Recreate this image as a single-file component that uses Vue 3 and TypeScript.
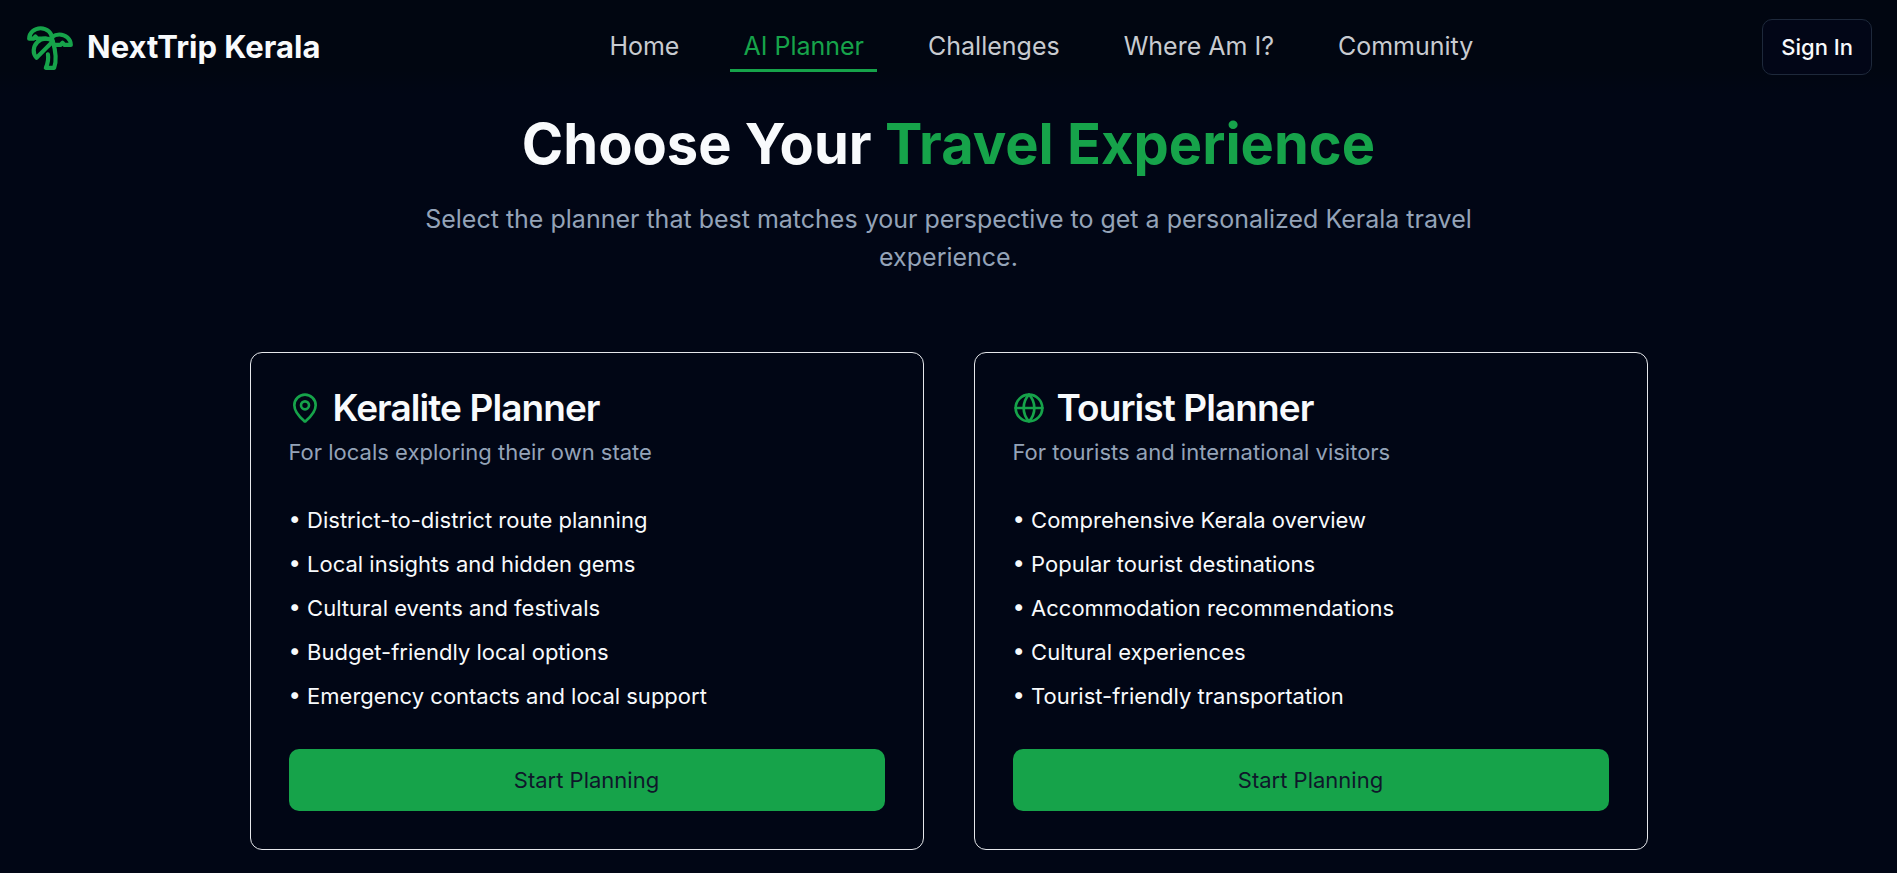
<script setup lang="ts">
interface NavItem {
  label: string
  active?: boolean
}

interface Planner {
  title: string
  description: string
  icon: 'pin' | 'globe'
  features: string[]
}

const navItems: NavItem[] = [
  { label: 'Home' },
  { label: 'AI Planner', active: true },
  { label: 'Challenges' },
  { label: 'Where Am I?' },
  { label: 'Community' },
]

const planners: Planner[] = [
  {
    title: 'Keralite Planner',
    description: 'For locals exploring their own state',
    icon: 'pin',
    features: [
      'District-to-district route planning',
      'Local insights and hidden gems',
      'Cultural events and festivals',
      'Budget-friendly local options',
      'Emergency contacts and local support',
    ],
  },
  {
    title: 'Tourist Planner',
    description: 'For tourists and international visitors',
    icon: 'globe',
    features: [
      'Comprehensive Kerala overview',
      'Popular tourist destinations',
      'Accommodation recommendations',
      'Cultural experiences',
      'Tourist-friendly transportation',
    ],
  },
]
</script>

<template>
  <div class="page">
    <header class="header">
      <a class="brand" href="#">
        <svg class="brand-icon" viewBox="0 0 24 24" aria-hidden="true">
          <path d="M13 8c0-2.76-2.46-5-5.5-5S2 5.24 2 8h2l1-1 1 1h4" />
          <path d="M13 7.14A5.82 5.82 0 0 1 16.5 6c3.04 0 5.5 2.24 5.5 5h-3l-1-1-1 1h-3" />
          <path d="M5.89 9.71c-2.15 2.15-2.3 5.47-.35 7.43l4.24-4.25.7-.7.71-.71 2.12-2.12c-1.95-1.96-5.27-1.8-7.42.35" />
          <path d="M11 15.5c.5 2.5-.17 4.5-1 6.5h4c2-5.5-.5-12-1-14" />
        </svg>
        <span>NextTrip Kerala</span>
      </a>
      <nav class="nav">
        <a
          v-for="item in navItems"
          :key="item.label"
          href="#"
          class="nav-link"
          :class="{ active: item.active }"
          :aria-current="item.active ? 'page' : undefined"
        >{{ item.label }}</a>
      </nav>
      <button type="button" class="sign-in">Sign In</button>
    </header>

    <main class="main">
      <section class="intro">
        <h1>Choose Your <span class="accent">Travel Experience</span></h1>
        <p>Select the planner that best matches your perspective to get a personalized Kerala travel experience.</p>
      </section>

      <section class="cards">
        <article v-for="planner in planners" :key="planner.title" class="card">
          <h2>
            <svg class="card-icon" viewBox="0 0 24 24" aria-hidden="true">
              <template v-if="planner.icon === 'pin'">
                <path d="M20 10c0 4.993-5.539 10.193-7.399 11.799a1 1 0 0 1-1.202 0C9.539 20.193 4 14.993 4 10a8 8 0 0 1 16 0" />
                <circle cx="12" cy="10" r="3" />
              </template>
              <template v-else>
                <circle cx="12" cy="12" r="10" />
                <path d="M12 2a14.5 14.5 0 0 0 0 20 14.5 14.5 0 0 0 0-20" />
                <path d="M2 12h20" />
              </template>
            </svg>
            <span>{{ planner.title }}</span>
          </h2>
          <p class="description">{{ planner.description }}</p>
          <ul>
            <li v-for="feature in planner.features" :key="feature">• {{ feature }}</li>
          </ul>
          <button type="button" class="start">Start Planning</button>
        </article>
      </section>
    </main>
  </div>
</template>

<style>
body {
  margin: 0;
  background: #010615;
}
</style>

<style scoped>
.page {
  min-height: 100vh;
  box-sizing: border-box;
  background: #010615;
  color: #f8fafc;
  font-family: Inter, "Liberation Sans", sans-serif;
  font-size: 22px;
  line-height: 32px;
}

.header {
  display: flex;
  align-items: center;
  justify-content: space-between;
  padding: 19px 25px;
  background: linear-gradient(#010611 75%, #010615);
}

.brand {
  display: flex;
  align-items: center;
  gap: 12px;
  color: inherit;
  text-decoration: none;
  font-size: 31px;
  font-weight: 700;
}

svg {
  flex: none;
  fill: none;
  stroke: #16a34a;
  stroke-width: 2;
  stroke-linecap: round;
  stroke-linejoin: round;
}

.brand-icon {
  width: 50px;
  height: 50px;
}

.nav {
  display: flex;
  gap: 38px;
}

.nav-link {
  padding: 8px 13px 7px;
  border-bottom: 3px solid transparent;
  color: #c8cbd0;
  text-decoration: none;
  font-size: 25px;
}

.nav-link.active {
  border-color: #16a34a;
  color: #16a34a;
}

button {
  font: inherit;
  cursor: pointer;
}

.sign-in {
  padding: 11px 18px;
  border: 1px solid #1e293b;
  border-radius: 10px;
  background: #020617;
  color: #f8fafc;
  font-weight: 500;
}

.main {
  padding: 19px 25px 23px;
}

.intro {
  max-width: 1050px;
  margin: 0 auto 76px;
  text-align: center;
}

h1 {
  margin: 0 0 25px;
  font-size: 56px;
  font-weight: 700;
  line-height: 62px;
}

.accent {
  color: #16a34a;
}

.intro p {
  margin: 0;
  color: #94a3b8;
  font-size: 25px;
  line-height: 38px;
}

.cards {
  display: grid;
  grid-template-columns: 1fr 1fr;
  gap: 50px;
  max-width: 1398px;
  margin: 0 auto;
}

.card {
  padding: 36px 38px 38px;
  border: 1px solid #e5e7eb;
  border-radius: 12px;
}

h2 {
  display: flex;
  align-items: center;
  gap: 12px;
  margin: 0 0 9px;
  font-size: 37px;
  font-weight: 600;
  line-height: 38px;
  letter-spacing: -0.025em;
}

.card-icon {
  width: 32px;
  height: 32px;
}

.description {
  margin: 0 0 30px;
  color: #94a3b8;
}

ul {
  margin: 0 0 31px;
  padding: 0;
  list-style: none;
}

li {
  line-height: 44px;
}

.start {
  display: block;
  width: 100%;
  padding: 15px 24px;
  border: 0;
  border-radius: 10px;
  background: #16a34a;
  color: #0f172a;
}
</style>
